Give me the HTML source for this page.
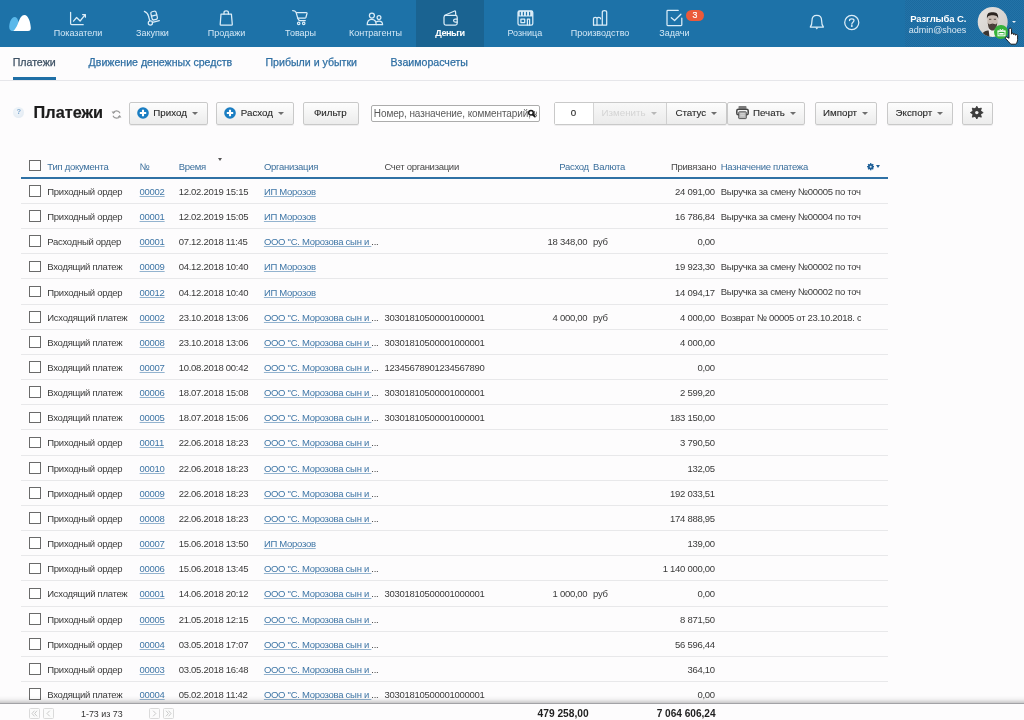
<!DOCTYPE html>
<html><head><meta charset="utf-8"><title>Платежи</title>
<style>
html,body{margin:0;padding:0;}
body{width:1024px;height:720px;overflow:hidden;position:relative;background:#fdfcfd;font-family:"Liberation Sans",sans-serif;}
.t{position:absolute;white-space:nowrap;line-height:1;}
</style></head><body><div style="position:absolute;left:0;top:0;width:1024px;height:720px;will-change:transform">
<div style="position:absolute;left:0;top:0;width:1024px;height:47px;background:#1d72a8"></div><div style="position:absolute;left:905px;top:0;width:119px;height:47px;background-color:#1e6ea3;background-image:repeating-conic-gradient(#1b6a9f 0 25%, #2373a8 0 50%);background-size:2px 2px;opacity:1"></div><div style="position:absolute;left:416px;top:0;width:68px;height:47px;background:#1a6391"></div><svg style="position:absolute;left:0;top:0" width="1024" height="47" viewBox="0 0 1024 47">
<path d="M14.5 17 C11.5 17 9.2 22.5 9.2 27 C9.2 30 11 31.1 13.5 31.1 L15.5 31.1 C17.5 29 18.8 25.5 18.6 22.5 C18.2 19 16.5 17 14.5 17Z" fill="#5ab8ea"/>
<path d="M24.4 15 C21 15 19.5 19.5 17.8 24 C16.5 27 15 29.5 13.3 31.1 L28 31.1 C30 31.1 31 29.8 30.8 27.5 C30.5 22.5 28.5 15 24.4 15Z" fill="#ffffff"/>
<path d="M70.6 12.3 V23.6 Q70.6 24.7 71.7 24.7 H83.2" stroke="#dbedf8" stroke-width="1.25" fill="none" stroke-linecap="round" stroke-linejoin="round"/>
<path d="M73.5 21.2 L76.6 17.5 L80.1 21 L85.2 14.6 M82.6 14.5 H85.4 V17.2" stroke="#dbedf8" stroke-width="1.25" fill="none" stroke-linecap="round" stroke-linejoin="round"/>
<path d="M144.4 11.4 C146.5 12.3 148 13.5 148.6 16.5 L149.8 20.8" stroke="#dbedf8" stroke-width="1.25" fill="none" stroke-linecap="round" stroke-linejoin="round"/>
<circle cx="150.4" cy="22.9" r="2.1" stroke="#dbedf8" stroke-width="1.25" fill="none" stroke-linecap="round" stroke-linejoin="round"/>
<path d="M152.4 22.3 L159.3 20.6" stroke="#dbedf8" stroke-width="1.25" fill="none" stroke-linecap="round" stroke-linejoin="round"/>
<g transform="rotate(-14 154 15.5)"><rect x="151.4" y="11.4" width="5.4" height="8.4" rx="1.6" stroke="#dbedf8" stroke-width="1.25" fill="none" stroke-linecap="round" stroke-linejoin="round"/><path d="M151.4 15.6 H156.8" stroke="#dbedf8" stroke-width="1.25" fill="none" stroke-linecap="round" stroke-linejoin="round"/></g>
<path d="M221 14.1 H231.4 L232.3 24.4 Q232.3 25.1 231.5 25.1 H220.9 Q220.2 25.1 220.2 24.4 Z" stroke="#dbedf8" stroke-width="1.25" fill="none" stroke-linecap="round" stroke-linejoin="round"/>
<path d="M224 14 V12.5 C224 10.2 228.4 10.2 228.4 12.5 V14" stroke="#dbedf8" stroke-width="1.25" fill="none" stroke-linecap="round" stroke-linejoin="round"/>
<path d="M292.7 10.6 Q295.2 10.7 296 12.2 L297.8 18.4 Q298.8 20.6 300 20.6 H305.3" stroke="#dbedf8" stroke-width="1.25" fill="none" stroke-linecap="round" stroke-linejoin="round"/>
<path d="M296.4 12.6 H306.3 Q307.2 12.6 307 13.5 L305.9 17.5 Q305.6 18.2 304.8 18.2 H297.8" stroke="#dbedf8" stroke-width="1.25" fill="none" stroke-linecap="round" stroke-linejoin="round"/>
<circle cx="298.7" cy="23.4" r="1.2" stroke="#dbedf8" stroke-width="1.25" fill="none" stroke-linecap="round" stroke-linejoin="round"/><circle cx="303.7" cy="23.4" r="1.2" stroke="#dbedf8" stroke-width="1.25" fill="none" stroke-linecap="round" stroke-linejoin="round"/>
<circle cx="371.9" cy="15.6" r="2.5" stroke="#dbedf8" stroke-width="1.25" fill="none" stroke-linecap="round" stroke-linejoin="round"/>
<path d="M367.2 24.7 C367.2 21 369.2 19.3 371.7 19.3 C374.2 19.3 376.2 21 376.2 24.7 Z" stroke="#dbedf8" stroke-width="1.25" fill="none" stroke-linecap="round" stroke-linejoin="round"/>
<circle cx="379" cy="17.6" r="1.9" stroke="#dbedf8" stroke-width="1.25" fill="none" stroke-linecap="round" stroke-linejoin="round"/>
<path d="M376.6 21.8 C377.2 21.2 378 21 379 21 C381.2 21 382.6 22.3 382.6 24.7 H376.6" stroke="#dbedf8" stroke-width="1.25" fill="none" stroke-linecap="round" stroke-linejoin="round"/>
<rect x="444" y="15.4" width="13.2" height="9.6" rx="1.8" stroke="#dbedf8" stroke-width="1.25" fill="none" stroke-linecap="round" stroke-linejoin="round"/>
<path d="M444.8 15.3 L454.6 11 Q455.4 10.8 455.5 11.6 L455.8 15.3" stroke="#dbedf8" stroke-width="1.25" fill="none" stroke-linecap="round" stroke-linejoin="round"/>
<path d="M457.1 19.1 H455.2 Q453.6 19.1 453.6 20.6 Q453.6 22.1 455.2 22.1 H457.1" stroke="#dbedf8" stroke-width="1.25" fill="none" stroke-linecap="round" stroke-linejoin="round"/>
<rect x="518" y="10.8" width="14.8" height="14.4" rx="1.6" stroke="#dbedf8" stroke-width="1.25" fill="none" stroke-linecap="round" stroke-linejoin="round"/>
<rect x="518" y="10.8" width="14.8" height="5.8" rx="1.2" fill="#dbedf8"/>
<path d="M520.3 12.4 V15 M523.4 12.4 V15 M526.5 12.4 V15 M529.6 12.4 V15" stroke="#1f71a7" stroke-width="1.2" stroke-linecap="round"/>
<rect x="520.9" y="19.1" width="3.8" height="3.5" stroke="#dbedf8" stroke-width="1.25" fill="none" stroke-linecap="round" stroke-linejoin="round"/>
<path d="M527.4 25 V19.1 H529.6 V25" stroke="#dbedf8" stroke-width="1.25" fill="none" stroke-linecap="round" stroke-linejoin="round"/>
<path d="M593.5 25 V18.8 Q593.5 17.3 595.3 17.3 Q597 17.3 597 18.8 V25 M597 18.8 Q597 17.3 598.8 17.3 Q600.6 17.3 600.6 18.8" stroke="#dbedf8" stroke-width="1.25" fill="none" stroke-linecap="round" stroke-linejoin="round"/>
<path d="M602.3 25 V12.3 Q602.3 10.6 604.5 10.6 Q606.7 10.6 606.7 12.3 V25 Z M593.5 25 H602.3" stroke="#dbedf8" stroke-width="1.25" fill="none" stroke-linecap="round" stroke-linejoin="round"/>
<path d="M678.2 10.4 H667.8 Q667 10.4 667 11.2 V24.7 Q667 25.5 667.8 25.5 H681 Q681.8 25.5 681.8 24.7 V18.2" stroke="#dbedf8" stroke-width="1.25" fill="none" stroke-linecap="round" stroke-linejoin="round"/>
<path d="M671.3 17.7 L674.6 20.5 L680.9 14.2" stroke="#dbedf8" stroke-width="1.25" fill="none" stroke-linecap="round" stroke-linejoin="round"/>
</svg><div class="t " style="left:-222.00px;width:600px;text-align:center;top:29.18px;font-size:9.0px;color:#d4e8f6;">Показатели</div><div class="t " style="left:-147.50px;width:600px;text-align:center;top:29.18px;font-size:9.0px;color:#d4e8f6;">Закупки</div><div class="t " style="left:-73.50px;width:600px;text-align:center;top:29.18px;font-size:9.0px;color:#d4e8f6;">Продажи</div><div class="t " style="left:0.60px;width:600px;text-align:center;top:29.18px;font-size:9.0px;color:#d4e8f6;">Товары</div><div class="t " style="left:75.50px;width:600px;text-align:center;top:29.18px;font-size:9.0px;color:#d4e8f6;">Контрагенты</div><div class="t " style="left:150.00px;width:600px;text-align:center;top:29.10px;font-size:9.1px;color:#ffffff;font-weight:bold;letter-spacing:-0.45px;">Деньги</div><div class="t " style="left:224.80px;width:600px;text-align:center;top:29.18px;font-size:9.0px;color:#d4e8f6;">Розница</div><div class="t " style="left:300.00px;width:600px;text-align:center;top:29.18px;font-size:9.0px;color:#d4e8f6;">Производство</div><div class="t " style="left:374.40px;width:600px;text-align:center;top:29.18px;font-size:9.0px;color:#d4e8f6;">Задачи</div><div style="position:absolute;left:686px;top:10px;width:18px;height:11px;border-radius:5.5px;background:#eb5a3b;color:#fff;font-size:8.8px;line-height:11px;text-align:center;font-weight:normal;-webkit-text-stroke:0.2px #fff">3</div><svg style="position:absolute;left:0;top:0" width="1024" height="47" viewBox="0 0 1024 47"><path d="M810.3 27 H823.4 C822 25.5 821.6 23.5 821.6 20.5 C821.6 17.2 819.5 15.4 816.8 15.4 C814.1 15.4 812 17.2 812 20.5 C812 23.5 811.6 25.5 810.3 27Z" stroke="#dbedf8" stroke-width="1.25" fill="none" stroke-linecap="round" stroke-linejoin="round" stroke-width="1.3"/><path d="M815.2 27.6 L816.8 29.6 L818.4 27.6Z" fill="#dbedf8"/></svg><svg style="position:absolute;left:0;top:0" width="1024" height="47" viewBox="0 0 1024 47"><circle cx="851.75" cy="22.45" r="7.05" stroke="#dbedf8" stroke-width="1.25" fill="none" stroke-linecap="round" stroke-linejoin="round" stroke-width="1.3"/><path d="M849.5 20.6 C849.5 18.4 854 18.4 854 20.6 C854 22.3 851.8 22.3 851.8 24.2" stroke="#dbedf8" stroke-width="1.25" fill="none" stroke-linecap="round" stroke-linejoin="round" stroke-width="1.7" stroke-linecap="butt"/><circle cx="851.8" cy="26" r="1" fill="#dbedf8"/></svg><div class="t " style="left:366.30px;width:600px;text-align:right;top:14.16px;font-size:9.5px;color:#ffffff;font-weight:bold;letter-spacing:-0.12px;">Разглыба С.</div><div class="t " style="left:366.30px;width:600px;text-align:right;top:25.88px;font-size:9.0px;color:#d9e8f3;">admin@shoes</div><svg style="position:absolute;left:977px;top:6px" width="32" height="32" viewBox="977 6 32 32">
<defs><clipPath id="av"><circle cx="992.7" cy="21.9" r="15"/></clipPath>
<linearGradient id="avbg" x1="0" y1="0" x2="1" y2="1"><stop offset="0" stop-color="#e6e3e0"/><stop offset="1" stop-color="#cfcac6"/></linearGradient></defs>
<circle cx="992.7" cy="21.9" r="15" fill="url(#avbg)"/>
<g clip-path="url(#av)">
<path d="M980 40 C981 33 984 31 988 30.5 L997 30.5 C1001 31 1004 33 1005 40Z" fill="#3a3430"/>
<path d="M988.5 29 L996.5 29 L995.5 37 L989.5 37Z" fill="#f2f0ee"/>
<ellipse cx="992.5" cy="21" rx="5.2" ry="7" fill="#c9bcb3"/>
<path d="M987 19 C986.5 13 989 12.3 992.5 12.3 C996 12.3 998.6 13 998.2 19 C997.5 16 996 15.2 992.5 15.2 C989 15.2 987.5 16 987 19Z" fill="#2b2420"/>
<path d="M987.8 22.5 C988 28.5 990 30.5 992.5 30.5 C995 30.5 997 28.5 997.2 22.5 C996.3 25.2 995 24.3 992.5 24.3 C990 24.3 988.7 25.2 987.8 22.5Z" fill="#4a3f39"/><path d="M990.3 24.6 Q992.5 23.6 994.7 24.6" stroke="#3a302a" stroke-width="1" fill="none"/>
<path d="M989 19.3 H991.3 M993.8 19.3 H996" stroke="#4a3e38" stroke-width="0.9"/>
</g></svg><div style="position:absolute;left:994px;top:24.8px;width:14px;height:14.5px;border-radius:50%;background:#36b23a"></div><svg style="position:absolute;left:996.5px;top:27.5px" width="9" height="9" viewBox="0 0 9 9"><rect x="1" y="3.2" width="7" height="4.6" fill="none" stroke="#fff" stroke-width="1"/><rect x="2.3" y="5" width="4.4" height="1.6" fill="#fff"/><path d="M0.5 3 H8.5 M2.8 1 L4.5 3 L6.2 1" stroke="#fff" stroke-width="1" fill="none"/></svg><div style="position:absolute;left:1012.2px;top:21px;width:0;height:0;border-left:2.3px solid transparent;border-right:2.3px solid transparent;border-top:2.6px solid #e8f0f6"></div><svg style="position:absolute;left:1003.2px;top:26.2px" width="17" height="20" viewBox="0 0 17 20">
<path d="M6 3.2 C6 1.8 8.5 1.8 8.5 3.2 V8.2 C8.5 6.8 10.7 6.8 10.7 8.2 V8.8 C10.7 7.5 12.7 7.5 12.7 8.8 V9.3 C12.7 8.2 14.6 8.2 14.6 9.5 V13.5 C14.6 15.5 13.8 17 12.8 18.2 H7.8 C6.5 16.8 4.5 14.5 2.6 12.6 C1.8 11.8 2.6 10.5 3.8 11 L6 12.3 Z" fill="#fff" stroke="#111" stroke-width="0.9" stroke-linejoin="round"/>
</svg><div class="t " style="left:12.70px;top:57.23px;font-size:10.6px;color:#3d5063;-webkit-text-stroke:0.25px currentColor;">Платежи</div><div class="t " style="left:88.60px;top:57.23px;font-size:10.6px;color:#2f6fa3;-webkit-text-stroke:0.25px currentColor;">Движение денежных средств</div><div class="t " style="left:265.50px;top:57.23px;font-size:10.6px;color:#2f6fa3;-webkit-text-stroke:0.25px currentColor;">Прибыли и убытки</div><div class="t " style="left:390.50px;top:57.23px;font-size:10.6px;color:#2f6fa3;-webkit-text-stroke:0.25px currentColor;">Взаиморасчеты</div><div style="position:absolute;left:13px;top:77px;width:43px;height:3px;background:#1f6fa6"></div><div style="position:absolute;left:0;top:80px;width:1024px;height:1px;background:#e6e6ea"></div><div style="position:absolute;left:13px;top:106.5px;width:11px;height:11px;border-radius:50%;background:radial-gradient(circle at 40% 35%,#f3f7fb,#dfe8f1)"></div><div class="t " style="left:-281.20px;width:600px;text-align:center;top:108.25px;font-size:7.5px;color:#80a9cf;font-weight:bold;">?</div><div class="t " style="left:33.60px;top:104.40px;font-size:16.3px;color:#1c1c1c;font-weight:bold;-webkit-text-stroke:0.2px currentColor;">Платежи</div><svg style="position:absolute;left:110.5px;top:108.5px" width="11" height="11" viewBox="0 0 11 11"><path d="M9 4.3 A3.8 3.8 0 0 0 2 4" stroke="#999" stroke-width="1.15" fill="none"/><path d="M2 6.7 A3.8 3.8 0 0 0 9 7" stroke="#999" stroke-width="1.15" fill="none"/><path d="M0.6 2.2 L2.2 5 L4.3 3.2Z M10.4 8.8 L8.8 6 L6.7 7.8Z" fill="#999"/></svg><div style="position:absolute;left:129px;top:102.2px;width:77.0px;height:20.8px;border:1px solid #c9c9c9;border-radius:2px;background:linear-gradient(#fdfdfd,#ececec);box-shadow:0 1px 0 rgba(0,0,0,0.06);"></div><svg style="position:absolute;left:137.1px;top:107.3px" width="12" height="12" viewBox="0 0 12 12"><circle cx="6" cy="6" r="5.8" fill="#1a7dc2"/><path d="M6 2.8 V9.2 M2.8 6 H9.2" stroke="#fff" stroke-width="2.1"/></svg><div class="t " style="left:153.30px;top:107.95px;font-size:9.75px;color:#2b2b2b;-webkit-text-stroke:0.12px currentColor;">Приход</div><div style="position:absolute;left:191.8px;top:111.8px;width:0;height:0;border-left:3.2px solid transparent;border-right:3.2px solid transparent;border-top:3.3px solid #6e6e6e"></div><div style="position:absolute;left:216.3px;top:102.2px;width:75.7px;height:20.8px;border:1px solid #c9c9c9;border-radius:2px;background:linear-gradient(#fdfdfd,#ececec);box-shadow:0 1px 0 rgba(0,0,0,0.06);"></div><svg style="position:absolute;left:224.3px;top:107.3px" width="12" height="12" viewBox="0 0 12 12"><circle cx="6" cy="6" r="5.8" fill="#1a7dc2"/><path d="M6 2.8 V9.2 M2.8 6 H9.2" stroke="#fff" stroke-width="2.1"/></svg><div class="t " style="left:240.80px;top:107.95px;font-size:9.75px;color:#2b2b2b;-webkit-text-stroke:0.12px currentColor;">Расход</div><div style="position:absolute;left:278px;top:111.8px;width:0;height:0;border-left:3.2px solid transparent;border-right:3.2px solid transparent;border-top:3.3px solid #6e6e6e"></div><div style="position:absolute;left:303px;top:102.2px;width:53.5px;height:20.8px;border:1px solid #c9c9c9;border-radius:2px;background:linear-gradient(#fdfdfd,#ececec);box-shadow:0 1px 0 rgba(0,0,0,0.06);"></div><div class="t " style="left:313.90px;top:107.95px;font-size:9.75px;color:#2b2b2b;-webkit-text-stroke:0.12px currentColor;">Фильтр</div><div style="position:absolute;left:371.2px;top:105.2px;width:166.5px;height:14.8px;border:1px solid #acacac;border-radius:2px;background:#fff;overflow:hidden"></div><div style="position:absolute;left:372.5px;top:106.4px;width:164px;height:14px;overflow:hidden;white-space:nowrap"><div class="t" style="left:1.3px;top:2.3px;font-size:10px;letter-spacing:-0.1px;color:#5a5a5a">Номер, назначение, комментарий, контрагент</div></div><svg style="position:absolute;left:0;top:0" width="1024" height="130" viewBox="0 0 1024 130"><circle cx="531" cy="112.7" r="2.3" stroke="#1a1a1a" stroke-width="1.5" fill="#fff"/><path d="M532.7 114.5 L534.9 116.6" stroke="#1a1a1a" stroke-width="1.8" stroke-linecap="round"/></svg><div style="position:absolute;left:554.2px;top:102.2px;width:170.5px;height:20.8px;border:1px solid #c9c9c9;border-radius:2px;background:linear-gradient(#fdfdfd,#ececec);box-shadow:0 1px 0 rgba(0,0,0,0.06);"></div><div style="position:absolute;left:555.2px;top:103.2px;width:37.6px;height:20.8px;background:#fff;border-right:1px solid #d4d4d4"></div><div style="position:absolute;left:593.8px;top:103.2px;width:72.3px;height:20.8px;background:linear-gradient(#f8f8f8,#ebebeb);border-right:1px solid #d0d0d0"></div><div class="t " style="left:273.50px;width:600px;text-align:center;top:107.95px;font-size:9.75px;color:#2b2b2b;-webkit-text-stroke:0.12px currentColor;">0</div><div class="t " style="left:601.60px;top:107.95px;font-size:9.75px;color:#d4d4d4;">Изменить</div><div style="position:absolute;left:650.8px;top:111.8px;width:0;height:0;border-left:3.2px solid transparent;border-right:3.2px solid transparent;border-top:3.3px solid #b8b8b8"></div><div class="t " style="left:675.40px;top:107.95px;font-size:9.75px;color:#2b2b2b;-webkit-text-stroke:0.12px currentColor;">Статус</div><div style="position:absolute;left:710.6px;top:111.8px;width:0;height:0;border-left:3.2px solid transparent;border-right:3.2px solid transparent;border-top:3.3px solid #6e6e6e"></div><div style="position:absolute;left:726.7px;top:102.2px;width:76.8px;height:20.8px;border:1px solid #c9c9c9;border-radius:2px;background:linear-gradient(#fdfdfd,#ececec);box-shadow:0 1px 0 rgba(0,0,0,0.06);"></div><svg style="position:absolute;left:0;top:0" width="1024" height="130" viewBox="0 0 1024 130"><rect x="738.5" y="106" width="8" height="2.8" rx="0.8" fill="#7a7a7a"/><rect x="736.8" y="109.2" width="11.4" height="5.6" rx="1.6" fill="#f4f4f4" stroke="#444" stroke-width="1.5"/><rect x="738.7" y="111.8" width="7.6" height="6.8" rx="0.6" fill="#b9b9b9" stroke="#4a4a4a" stroke-width="0.9"/><path d="M740.3 113.8 H744.7 M740.3 115.8 H744.7" stroke="#e0e0e0" stroke-width="0.8"/></svg><div class="t " style="left:753.00px;top:107.95px;font-size:9.75px;color:#2b2b2b;-webkit-text-stroke:0.12px currentColor;">Печать</div><div style="position:absolute;left:789.6px;top:111.8px;width:0;height:0;border-left:3.2px solid transparent;border-right:3.2px solid transparent;border-top:3.3px solid #6e6e6e"></div><div style="position:absolute;left:815.1px;top:102.2px;width:60.2px;height:20.8px;border:1px solid #c9c9c9;border-radius:2px;background:linear-gradient(#fdfdfd,#ececec);box-shadow:0 1px 0 rgba(0,0,0,0.06);"></div><div class="t " style="left:823.00px;top:107.95px;font-size:9.75px;color:#2b2b2b;-webkit-text-stroke:0.12px currentColor;">Импорт</div><div style="position:absolute;left:861.7px;top:111.8px;width:0;height:0;border-left:3.2px solid transparent;border-right:3.2px solid transparent;border-top:3.3px solid #6e6e6e"></div><div style="position:absolute;left:887.1px;top:102.2px;width:63.9px;height:20.8px;border:1px solid #c9c9c9;border-radius:2px;background:linear-gradient(#fdfdfd,#ececec);box-shadow:0 1px 0 rgba(0,0,0,0.06);"></div><div class="t " style="left:895.60px;top:107.95px;font-size:9.75px;color:#2b2b2b;-webkit-text-stroke:0.12px currentColor;">Экспорт</div><div style="position:absolute;left:937px;top:111.8px;width:0;height:0;border-left:3.2px solid transparent;border-right:3.2px solid transparent;border-top:3.3px solid #6e6e6e"></div><div style="position:absolute;left:961.9px;top:102.2px;width:28.7px;height:20.8px;border:1px solid #c9c9c9;border-radius:2px;background:linear-gradient(#fdfdfd,#ececec);box-shadow:0 1px 0 rgba(0,0,0,0.06);"></div><svg style="position:absolute;left:0;top:0" width="1024" height="130" viewBox="0 0 1024 130"><polygon points="976.80,106.20 978.33,108.90 981.33,108.07 980.50,111.07 983.20,112.60 980.50,114.13 981.33,117.13 978.33,116.30 976.80,119.00 975.27,116.30 972.27,117.13 973.10,114.13 970.40,112.60 973.10,111.07 972.27,108.07 975.27,108.90" fill="#3d3d3d" stroke="#3d3d3d" stroke-width="0.9" stroke-linejoin="round"/><circle cx="976.8" cy="112.6" r="4.6" fill="#3d3d3d"/><circle cx="976.8" cy="112.6" r="1.7" fill="#f2f2f2"/></svg><div style="position:absolute;left:29px;top:159.55px;width:9.7px;height:9.7px;border:1.1px solid #6a6a6a;background:#fff"></div><div class="t " style="left:47.30px;top:161.56px;font-size:9.5px;color:#3b6f9c;letter-spacing:-0.28px;">Тип документа</div><div class="t " style="left:139.60px;top:161.56px;font-size:9.5px;color:#3b6f9c;letter-spacing:-0.28px;">№</div><div class="t " style="left:178.75px;top:161.56px;font-size:9.5px;color:#3b6f9c;letter-spacing:-0.28px;">Время</div><div style="position:absolute;left:217.8px;top:157.5px;width:0;height:0;border-left:2.2px solid transparent;border-right:2.2px solid transparent;border-top:3px solid #555"></div><div class="t " style="left:263.90px;top:161.56px;font-size:9.5px;color:#3b6f9c;letter-spacing:-0.28px;">Организация</div><div class="t " style="left:384.40px;top:161.56px;font-size:9.5px;color:#484848;letter-spacing:-0.28px;">Счет организации</div><div class="t " style="left:-11.20px;width:600px;text-align:right;top:161.56px;font-size:9.5px;color:#3b6f9c;letter-spacing:-0.28px;">Расход</div><div class="t " style="left:593.10px;top:161.56px;font-size:9.5px;color:#3b6f9c;letter-spacing:-0.28px;">Валюта</div><div class="t " style="left:116.20px;width:600px;text-align:right;top:161.56px;font-size:9.5px;color:#484848;letter-spacing:-0.28px;">Привязано</div><div class="t " style="left:720.70px;top:161.56px;font-size:9.5px;color:#3b6f9c;letter-spacing:-0.28px;">Назначение платежа</div><svg style="position:absolute;left:866.6px;top:163.2px" width="7.4" height="7.4" viewBox="0 0 8 8"><g fill="#1c5e97"><circle cx="4" cy="4" r="2.9"/><rect x="3.25" y="0.1" width="1.5" height="2" transform="rotate(0 4 4)"/><rect x="3.25" y="0.1" width="1.5" height="2" transform="rotate(45 4 4)"/><rect x="3.25" y="0.1" width="1.5" height="2" transform="rotate(90 4 4)"/><rect x="3.25" y="0.1" width="1.5" height="2" transform="rotate(135 4 4)"/><rect x="3.25" y="0.1" width="1.5" height="2" transform="rotate(180 4 4)"/><rect x="3.25" y="0.1" width="1.5" height="2" transform="rotate(225 4 4)"/><rect x="3.25" y="0.1" width="1.5" height="2" transform="rotate(270 4 4)"/><rect x="3.25" y="0.1" width="1.5" height="2" transform="rotate(315 4 4)"/></g><circle cx="4" cy="4" r="1.1" fill="#d8e8f0"/></svg><div style="position:absolute;left:876.3px;top:165px;width:0;height:0;border-left:2px solid transparent;border-right:2px solid transparent;border-top:3px solid #1f5f95"></div><div style="position:absolute;left:21px;top:177.3px;width:867px;height:2px;background:#2f71a5"></div><div style="position:absolute;left:21px;top:203.00px;width:867px;height:1px;background:#e8e8ea"></div><div style="position:absolute;left:29px;top:185.15px;width:9.7px;height:9.7px;border:1.1px solid #6a6a6a;background:#fff"></div><div class="t " style="left:47.30px;top:186.86px;font-size:9.5px;color:#3a3a3a;letter-spacing:-0.28px;">Приходный ордер</div><div class="t " style="left:139.60px;top:186.86px;font-size:9.5px;color:#3f76a6;letter-spacing:-0.28px;text-decoration:underline;text-decoration-color:#93b3cf;">00002</div><div class="t " style="left:178.75px;top:186.86px;font-size:9.5px;color:#3a3a3a;letter-spacing:-0.28px;">12.02.2019 15:15</div><div class="t " style="left:263.90px;top:186.86px;font-size:9.5px;color:#3f76a6;letter-spacing:-0.28px;text-decoration:underline;text-decoration-color:#93b3cf;">ИП Морозов</div><div class="t " style="left:114.80px;width:600px;text-align:right;top:186.86px;font-size:9.5px;color:#3a3a3a;letter-spacing:-0.28px;">24 091,00</div><div style="position:absolute;left:720.7px;top:184.90px;width:140px;height:14px;overflow:hidden;white-space:nowrap"><div class="t" style="left:0;top:1.96px;font-size:9.5px;color:#3a3a3a;letter-spacing:-0.28px;">Выручка за смену №00005 по точке продаж</div></div><div style="position:absolute;left:21px;top:228.16px;width:867px;height:1px;background:#e8e8ea"></div><div style="position:absolute;left:29px;top:210.31px;width:9.7px;height:9.7px;border:1.1px solid #6a6a6a;background:#fff"></div><div class="t " style="left:47.30px;top:212.02px;font-size:9.5px;color:#3a3a3a;letter-spacing:-0.28px;">Приходный ордер</div><div class="t " style="left:139.60px;top:212.02px;font-size:9.5px;color:#3f76a6;letter-spacing:-0.28px;text-decoration:underline;text-decoration-color:#93b3cf;">00001</div><div class="t " style="left:178.75px;top:212.02px;font-size:9.5px;color:#3a3a3a;letter-spacing:-0.28px;">12.02.2019 15:05</div><div class="t " style="left:263.90px;top:212.02px;font-size:9.5px;color:#3f76a6;letter-spacing:-0.28px;text-decoration:underline;text-decoration-color:#93b3cf;">ИП Морозов</div><div class="t " style="left:114.80px;width:600px;text-align:right;top:212.02px;font-size:9.5px;color:#3a3a3a;letter-spacing:-0.28px;">16 786,84</div><div style="position:absolute;left:720.7px;top:210.06px;width:140px;height:14px;overflow:hidden;white-space:nowrap"><div class="t" style="left:0;top:1.96px;font-size:9.5px;color:#3a3a3a;letter-spacing:-0.28px;">Выручка за смену №00004 по точке продаж</div></div><div style="position:absolute;left:21px;top:253.32px;width:867px;height:1px;background:#e8e8ea"></div><div style="position:absolute;left:29px;top:235.47px;width:9.7px;height:9.7px;border:1.1px solid #6a6a6a;background:#fff"></div><div class="t " style="left:47.30px;top:237.18px;font-size:9.5px;color:#3a3a3a;letter-spacing:-0.28px;">Расходный ордер</div><div class="t " style="left:139.60px;top:237.18px;font-size:9.5px;color:#3f76a6;letter-spacing:-0.28px;text-decoration:underline;text-decoration-color:#93b3cf;">00001</div><div class="t " style="left:178.75px;top:237.18px;font-size:9.5px;color:#3a3a3a;letter-spacing:-0.28px;">07.12.2018 11:45</div><div class="t " style="left:263.90px;top:237.18px;font-size:9.5px;color:#3f76a6;letter-spacing:-0.28px;"><span style="text-decoration:underline;text-decoration-color:#93b3cf">ООО "С. Морозова сын и </span><span style="color:#3a3a3a">...</span></div><div class="t " style="left:-12.70px;width:600px;text-align:right;top:237.18px;font-size:9.5px;color:#3a3a3a;letter-spacing:-0.28px;">18 348,00</div><div class="t " style="left:593.10px;top:237.18px;font-size:9.5px;color:#3a3a3a;letter-spacing:-0.28px;">руб</div><div class="t " style="left:114.80px;width:600px;text-align:right;top:237.18px;font-size:9.5px;color:#3a3a3a;letter-spacing:-0.28px;">0,00</div><div style="position:absolute;left:21px;top:278.48px;width:867px;height:1px;background:#e8e8ea"></div><div style="position:absolute;left:29px;top:260.63px;width:9.7px;height:9.7px;border:1.1px solid #6a6a6a;background:#fff"></div><div class="t " style="left:47.30px;top:262.34px;font-size:9.5px;color:#3a3a3a;letter-spacing:-0.28px;">Входящий платеж</div><div class="t " style="left:139.60px;top:262.34px;font-size:9.5px;color:#3f76a6;letter-spacing:-0.28px;text-decoration:underline;text-decoration-color:#93b3cf;">00009</div><div class="t " style="left:178.75px;top:262.34px;font-size:9.5px;color:#3a3a3a;letter-spacing:-0.28px;">04.12.2018 10:40</div><div class="t " style="left:263.90px;top:262.34px;font-size:9.5px;color:#3f76a6;letter-spacing:-0.28px;text-decoration:underline;text-decoration-color:#93b3cf;">ИП Морозов</div><div class="t " style="left:114.80px;width:600px;text-align:right;top:262.34px;font-size:9.5px;color:#3a3a3a;letter-spacing:-0.28px;">19 923,30</div><div style="position:absolute;left:720.7px;top:260.38px;width:140px;height:14px;overflow:hidden;white-space:nowrap"><div class="t" style="left:0;top:1.96px;font-size:9.5px;color:#3a3a3a;letter-spacing:-0.28px;">Выручка за смену №00002 по точке продаж</div></div><div style="position:absolute;left:21px;top:303.64px;width:867px;height:1px;background:#e8e8ea"></div><div style="position:absolute;left:29px;top:285.79px;width:9.7px;height:9.7px;border:1.1px solid #6a6a6a;background:#fff"></div><div class="t " style="left:47.30px;top:287.50px;font-size:9.5px;color:#3a3a3a;letter-spacing:-0.28px;">Приходный ордер</div><div class="t " style="left:139.60px;top:287.50px;font-size:9.5px;color:#3f76a6;letter-spacing:-0.28px;text-decoration:underline;text-decoration-color:#93b3cf;">00012</div><div class="t " style="left:178.75px;top:287.50px;font-size:9.5px;color:#3a3a3a;letter-spacing:-0.28px;">04.12.2018 10:40</div><div class="t " style="left:263.90px;top:287.50px;font-size:9.5px;color:#3f76a6;letter-spacing:-0.28px;text-decoration:underline;text-decoration-color:#93b3cf;">ИП Морозов</div><div class="t " style="left:114.80px;width:600px;text-align:right;top:287.50px;font-size:9.5px;color:#3a3a3a;letter-spacing:-0.28px;">14 094,17</div><div style="position:absolute;left:720.7px;top:285.54px;width:140px;height:14px;overflow:hidden;white-space:nowrap"><div class="t" style="left:0;top:1.96px;font-size:9.5px;color:#3a3a3a;letter-spacing:-0.28px;">Выручка за смену №00002 по точке продаж</div></div><div style="position:absolute;left:21px;top:328.80px;width:867px;height:1px;background:#e8e8ea"></div><div style="position:absolute;left:29px;top:310.95px;width:9.7px;height:9.7px;border:1.1px solid #6a6a6a;background:#fff"></div><div class="t " style="left:47.30px;top:312.66px;font-size:9.5px;color:#3a3a3a;letter-spacing:-0.28px;">Исходящий платеж</div><div class="t " style="left:139.60px;top:312.66px;font-size:9.5px;color:#3f76a6;letter-spacing:-0.28px;text-decoration:underline;text-decoration-color:#93b3cf;">00002</div><div class="t " style="left:178.75px;top:312.66px;font-size:9.5px;color:#3a3a3a;letter-spacing:-0.28px;">23.10.2018 13:06</div><div class="t " style="left:263.90px;top:312.66px;font-size:9.5px;color:#3f76a6;letter-spacing:-0.28px;"><span style="text-decoration:underline;text-decoration-color:#93b3cf">ООО "С. Морозова сын и </span><span style="color:#3a3a3a">...</span></div><div class="t " style="left:384.40px;top:312.66px;font-size:9.5px;color:#3a3a3a;letter-spacing:-0.28px;">30301810500001000001</div><div class="t " style="left:-12.70px;width:600px;text-align:right;top:312.66px;font-size:9.5px;color:#3a3a3a;letter-spacing:-0.28px;">4 000,00</div><div class="t " style="left:593.10px;top:312.66px;font-size:9.5px;color:#3a3a3a;letter-spacing:-0.28px;">руб</div><div class="t " style="left:114.80px;width:600px;text-align:right;top:312.66px;font-size:9.5px;color:#3a3a3a;letter-spacing:-0.28px;">4 000,00</div><div style="position:absolute;left:720.7px;top:310.70px;width:140px;height:14px;overflow:hidden;white-space:nowrap"><div class="t" style="left:0;top:1.96px;font-size:9.5px;color:#3a3a3a;letter-spacing:-0.28px;">Возврат № 00005 от 23.10.2018. с</div></div><div style="position:absolute;left:21px;top:353.96px;width:867px;height:1px;background:#e8e8ea"></div><div style="position:absolute;left:29px;top:336.11px;width:9.7px;height:9.7px;border:1.1px solid #6a6a6a;background:#fff"></div><div class="t " style="left:47.30px;top:337.82px;font-size:9.5px;color:#3a3a3a;letter-spacing:-0.28px;">Входящий платеж</div><div class="t " style="left:139.60px;top:337.82px;font-size:9.5px;color:#3f76a6;letter-spacing:-0.28px;text-decoration:underline;text-decoration-color:#93b3cf;">00008</div><div class="t " style="left:178.75px;top:337.82px;font-size:9.5px;color:#3a3a3a;letter-spacing:-0.28px;">23.10.2018 13:06</div><div class="t " style="left:263.90px;top:337.82px;font-size:9.5px;color:#3f76a6;letter-spacing:-0.28px;"><span style="text-decoration:underline;text-decoration-color:#93b3cf">ООО "С. Морозова сын и </span><span style="color:#3a3a3a">...</span></div><div class="t " style="left:384.40px;top:337.82px;font-size:9.5px;color:#3a3a3a;letter-spacing:-0.28px;">30301810500001000001</div><div class="t " style="left:114.80px;width:600px;text-align:right;top:337.82px;font-size:9.5px;color:#3a3a3a;letter-spacing:-0.28px;">4 000,00</div><div style="position:absolute;left:21px;top:379.12px;width:867px;height:1px;background:#e8e8ea"></div><div style="position:absolute;left:29px;top:361.27px;width:9.7px;height:9.7px;border:1.1px solid #6a6a6a;background:#fff"></div><div class="t " style="left:47.30px;top:362.98px;font-size:9.5px;color:#3a3a3a;letter-spacing:-0.28px;">Входящий платеж</div><div class="t " style="left:139.60px;top:362.98px;font-size:9.5px;color:#3f76a6;letter-spacing:-0.28px;text-decoration:underline;text-decoration-color:#93b3cf;">00007</div><div class="t " style="left:178.75px;top:362.98px;font-size:9.5px;color:#3a3a3a;letter-spacing:-0.28px;">10.08.2018 00:42</div><div class="t " style="left:263.90px;top:362.98px;font-size:9.5px;color:#3f76a6;letter-spacing:-0.28px;"><span style="text-decoration:underline;text-decoration-color:#93b3cf">ООО "С. Морозова сын и </span><span style="color:#3a3a3a">...</span></div><div class="t " style="left:384.40px;top:362.98px;font-size:9.5px;color:#3a3a3a;letter-spacing:-0.28px;">12345678901234567890</div><div class="t " style="left:114.80px;width:600px;text-align:right;top:362.98px;font-size:9.5px;color:#3a3a3a;letter-spacing:-0.28px;">0,00</div><div style="position:absolute;left:21px;top:404.28px;width:867px;height:1px;background:#e8e8ea"></div><div style="position:absolute;left:29px;top:386.43px;width:9.7px;height:9.7px;border:1.1px solid #6a6a6a;background:#fff"></div><div class="t " style="left:47.30px;top:388.14px;font-size:9.5px;color:#3a3a3a;letter-spacing:-0.28px;">Входящий платеж</div><div class="t " style="left:139.60px;top:388.14px;font-size:9.5px;color:#3f76a6;letter-spacing:-0.28px;text-decoration:underline;text-decoration-color:#93b3cf;">00006</div><div class="t " style="left:178.75px;top:388.14px;font-size:9.5px;color:#3a3a3a;letter-spacing:-0.28px;">18.07.2018 15:08</div><div class="t " style="left:263.90px;top:388.14px;font-size:9.5px;color:#3f76a6;letter-spacing:-0.28px;"><span style="text-decoration:underline;text-decoration-color:#93b3cf">ООО "С. Морозова сын и </span><span style="color:#3a3a3a">...</span></div><div class="t " style="left:384.40px;top:388.14px;font-size:9.5px;color:#3a3a3a;letter-spacing:-0.28px;">30301810500001000001</div><div class="t " style="left:114.80px;width:600px;text-align:right;top:388.14px;font-size:9.5px;color:#3a3a3a;letter-spacing:-0.28px;">2 599,20</div><div style="position:absolute;left:21px;top:429.44px;width:867px;height:1px;background:#e8e8ea"></div><div style="position:absolute;left:29px;top:411.59px;width:9.7px;height:9.7px;border:1.1px solid #6a6a6a;background:#fff"></div><div class="t " style="left:47.30px;top:413.30px;font-size:9.5px;color:#3a3a3a;letter-spacing:-0.28px;">Входящий платеж</div><div class="t " style="left:139.60px;top:413.30px;font-size:9.5px;color:#3f76a6;letter-spacing:-0.28px;text-decoration:underline;text-decoration-color:#93b3cf;">00005</div><div class="t " style="left:178.75px;top:413.30px;font-size:9.5px;color:#3a3a3a;letter-spacing:-0.28px;">18.07.2018 15:06</div><div class="t " style="left:263.90px;top:413.30px;font-size:9.5px;color:#3f76a6;letter-spacing:-0.28px;"><span style="text-decoration:underline;text-decoration-color:#93b3cf">ООО "С. Морозова сын и </span><span style="color:#3a3a3a">...</span></div><div class="t " style="left:384.40px;top:413.30px;font-size:9.5px;color:#3a3a3a;letter-spacing:-0.28px;">30301810500001000001</div><div class="t " style="left:114.80px;width:600px;text-align:right;top:413.30px;font-size:9.5px;color:#3a3a3a;letter-spacing:-0.28px;">183 150,00</div><div style="position:absolute;left:21px;top:454.60px;width:867px;height:1px;background:#e8e8ea"></div><div style="position:absolute;left:29px;top:436.75px;width:9.7px;height:9.7px;border:1.1px solid #6a6a6a;background:#fff"></div><div class="t " style="left:47.30px;top:438.46px;font-size:9.5px;color:#3a3a3a;letter-spacing:-0.28px;">Приходный ордер</div><div class="t " style="left:139.60px;top:438.46px;font-size:9.5px;color:#3f76a6;letter-spacing:-0.28px;text-decoration:underline;text-decoration-color:#93b3cf;">00011</div><div class="t " style="left:178.75px;top:438.46px;font-size:9.5px;color:#3a3a3a;letter-spacing:-0.28px;">22.06.2018 18:23</div><div class="t " style="left:263.90px;top:438.46px;font-size:9.5px;color:#3f76a6;letter-spacing:-0.28px;"><span style="text-decoration:underline;text-decoration-color:#93b3cf">ООО "С. Морозова сын и </span><span style="color:#3a3a3a">...</span></div><div class="t " style="left:114.80px;width:600px;text-align:right;top:438.46px;font-size:9.5px;color:#3a3a3a;letter-spacing:-0.28px;">3 790,50</div><div style="position:absolute;left:21px;top:479.76px;width:867px;height:1px;background:#e8e8ea"></div><div style="position:absolute;left:29px;top:461.91px;width:9.7px;height:9.7px;border:1.1px solid #6a6a6a;background:#fff"></div><div class="t " style="left:47.30px;top:463.62px;font-size:9.5px;color:#3a3a3a;letter-spacing:-0.28px;">Приходный ордер</div><div class="t " style="left:139.60px;top:463.62px;font-size:9.5px;color:#3f76a6;letter-spacing:-0.28px;text-decoration:underline;text-decoration-color:#93b3cf;">00010</div><div class="t " style="left:178.75px;top:463.62px;font-size:9.5px;color:#3a3a3a;letter-spacing:-0.28px;">22.06.2018 18:23</div><div class="t " style="left:263.90px;top:463.62px;font-size:9.5px;color:#3f76a6;letter-spacing:-0.28px;"><span style="text-decoration:underline;text-decoration-color:#93b3cf">ООО "С. Морозова сын и </span><span style="color:#3a3a3a">...</span></div><div class="t " style="left:114.80px;width:600px;text-align:right;top:463.62px;font-size:9.5px;color:#3a3a3a;letter-spacing:-0.28px;">132,05</div><div style="position:absolute;left:21px;top:504.92px;width:867px;height:1px;background:#e8e8ea"></div><div style="position:absolute;left:29px;top:487.07px;width:9.7px;height:9.7px;border:1.1px solid #6a6a6a;background:#fff"></div><div class="t " style="left:47.30px;top:488.78px;font-size:9.5px;color:#3a3a3a;letter-spacing:-0.28px;">Приходный ордер</div><div class="t " style="left:139.60px;top:488.78px;font-size:9.5px;color:#3f76a6;letter-spacing:-0.28px;text-decoration:underline;text-decoration-color:#93b3cf;">00009</div><div class="t " style="left:178.75px;top:488.78px;font-size:9.5px;color:#3a3a3a;letter-spacing:-0.28px;">22.06.2018 18:23</div><div class="t " style="left:263.90px;top:488.78px;font-size:9.5px;color:#3f76a6;letter-spacing:-0.28px;"><span style="text-decoration:underline;text-decoration-color:#93b3cf">ООО "С. Морозова сын и </span><span style="color:#3a3a3a">...</span></div><div class="t " style="left:114.80px;width:600px;text-align:right;top:488.78px;font-size:9.5px;color:#3a3a3a;letter-spacing:-0.28px;">192 033,51</div><div style="position:absolute;left:21px;top:530.08px;width:867px;height:1px;background:#e8e8ea"></div><div style="position:absolute;left:29px;top:512.23px;width:9.7px;height:9.7px;border:1.1px solid #6a6a6a;background:#fff"></div><div class="t " style="left:47.30px;top:513.94px;font-size:9.5px;color:#3a3a3a;letter-spacing:-0.28px;">Приходный ордер</div><div class="t " style="left:139.60px;top:513.94px;font-size:9.5px;color:#3f76a6;letter-spacing:-0.28px;text-decoration:underline;text-decoration-color:#93b3cf;">00008</div><div class="t " style="left:178.75px;top:513.94px;font-size:9.5px;color:#3a3a3a;letter-spacing:-0.28px;">22.06.2018 18:23</div><div class="t " style="left:263.90px;top:513.94px;font-size:9.5px;color:#3f76a6;letter-spacing:-0.28px;"><span style="text-decoration:underline;text-decoration-color:#93b3cf">ООО "С. Морозова сын и </span><span style="color:#3a3a3a">...</span></div><div class="t " style="left:114.80px;width:600px;text-align:right;top:513.94px;font-size:9.5px;color:#3a3a3a;letter-spacing:-0.28px;">174 888,95</div><div style="position:absolute;left:21px;top:555.24px;width:867px;height:1px;background:#e8e8ea"></div><div style="position:absolute;left:29px;top:537.39px;width:9.7px;height:9.7px;border:1.1px solid #6a6a6a;background:#fff"></div><div class="t " style="left:47.30px;top:539.10px;font-size:9.5px;color:#3a3a3a;letter-spacing:-0.28px;">Приходный ордер</div><div class="t " style="left:139.60px;top:539.10px;font-size:9.5px;color:#3f76a6;letter-spacing:-0.28px;text-decoration:underline;text-decoration-color:#93b3cf;">00007</div><div class="t " style="left:178.75px;top:539.10px;font-size:9.5px;color:#3a3a3a;letter-spacing:-0.28px;">15.06.2018 13:50</div><div class="t " style="left:263.90px;top:539.10px;font-size:9.5px;color:#3f76a6;letter-spacing:-0.28px;text-decoration:underline;text-decoration-color:#93b3cf;">ИП Морозов</div><div class="t " style="left:114.80px;width:600px;text-align:right;top:539.10px;font-size:9.5px;color:#3a3a3a;letter-spacing:-0.28px;">139,00</div><div style="position:absolute;left:21px;top:580.40px;width:867px;height:1px;background:#e8e8ea"></div><div style="position:absolute;left:29px;top:562.55px;width:9.7px;height:9.7px;border:1.1px solid #6a6a6a;background:#fff"></div><div class="t " style="left:47.30px;top:564.26px;font-size:9.5px;color:#3a3a3a;letter-spacing:-0.28px;">Приходный ордер</div><div class="t " style="left:139.60px;top:564.26px;font-size:9.5px;color:#3f76a6;letter-spacing:-0.28px;text-decoration:underline;text-decoration-color:#93b3cf;">00006</div><div class="t " style="left:178.75px;top:564.26px;font-size:9.5px;color:#3a3a3a;letter-spacing:-0.28px;">15.06.2018 13:45</div><div class="t " style="left:263.90px;top:564.26px;font-size:9.5px;color:#3f76a6;letter-spacing:-0.28px;"><span style="text-decoration:underline;text-decoration-color:#93b3cf">ООО "С. Морозова сын и </span><span style="color:#3a3a3a">...</span></div><div class="t " style="left:114.80px;width:600px;text-align:right;top:564.26px;font-size:9.5px;color:#3a3a3a;letter-spacing:-0.28px;">1 140 000,00</div><div style="position:absolute;left:21px;top:605.56px;width:867px;height:1px;background:#e8e8ea"></div><div style="position:absolute;left:29px;top:587.71px;width:9.7px;height:9.7px;border:1.1px solid #6a6a6a;background:#fff"></div><div class="t " style="left:47.30px;top:589.42px;font-size:9.5px;color:#3a3a3a;letter-spacing:-0.28px;">Исходящий платеж</div><div class="t " style="left:139.60px;top:589.42px;font-size:9.5px;color:#3f76a6;letter-spacing:-0.28px;text-decoration:underline;text-decoration-color:#93b3cf;">00001</div><div class="t " style="left:178.75px;top:589.42px;font-size:9.5px;color:#3a3a3a;letter-spacing:-0.28px;">14.06.2018 20:12</div><div class="t " style="left:263.90px;top:589.42px;font-size:9.5px;color:#3f76a6;letter-spacing:-0.28px;"><span style="text-decoration:underline;text-decoration-color:#93b3cf">ООО "С. Морозова сын и </span><span style="color:#3a3a3a">...</span></div><div class="t " style="left:384.40px;top:589.42px;font-size:9.5px;color:#3a3a3a;letter-spacing:-0.28px;">30301810500001000001</div><div class="t " style="left:-12.70px;width:600px;text-align:right;top:589.42px;font-size:9.5px;color:#3a3a3a;letter-spacing:-0.28px;">1 000,00</div><div class="t " style="left:593.10px;top:589.42px;font-size:9.5px;color:#3a3a3a;letter-spacing:-0.28px;">руб</div><div class="t " style="left:114.80px;width:600px;text-align:right;top:589.42px;font-size:9.5px;color:#3a3a3a;letter-spacing:-0.28px;">0,00</div><div style="position:absolute;left:21px;top:630.72px;width:867px;height:1px;background:#e8e8ea"></div><div style="position:absolute;left:29px;top:612.87px;width:9.7px;height:9.7px;border:1.1px solid #6a6a6a;background:#fff"></div><div class="t " style="left:47.30px;top:614.58px;font-size:9.5px;color:#3a3a3a;letter-spacing:-0.28px;">Приходный ордер</div><div class="t " style="left:139.60px;top:614.58px;font-size:9.5px;color:#3f76a6;letter-spacing:-0.28px;text-decoration:underline;text-decoration-color:#93b3cf;">00005</div><div class="t " style="left:178.75px;top:614.58px;font-size:9.5px;color:#3a3a3a;letter-spacing:-0.28px;">21.05.2018 12:15</div><div class="t " style="left:263.90px;top:614.58px;font-size:9.5px;color:#3f76a6;letter-spacing:-0.28px;"><span style="text-decoration:underline;text-decoration-color:#93b3cf">ООО "С. Морозова сын и </span><span style="color:#3a3a3a">...</span></div><div class="t " style="left:114.80px;width:600px;text-align:right;top:614.58px;font-size:9.5px;color:#3a3a3a;letter-spacing:-0.28px;">8 871,50</div><div style="position:absolute;left:21px;top:655.88px;width:867px;height:1px;background:#e8e8ea"></div><div style="position:absolute;left:29px;top:638.03px;width:9.7px;height:9.7px;border:1.1px solid #6a6a6a;background:#fff"></div><div class="t " style="left:47.30px;top:639.74px;font-size:9.5px;color:#3a3a3a;letter-spacing:-0.28px;">Приходный ордер</div><div class="t " style="left:139.60px;top:639.74px;font-size:9.5px;color:#3f76a6;letter-spacing:-0.28px;text-decoration:underline;text-decoration-color:#93b3cf;">00004</div><div class="t " style="left:178.75px;top:639.74px;font-size:9.5px;color:#3a3a3a;letter-spacing:-0.28px;">03.05.2018 17:07</div><div class="t " style="left:263.90px;top:639.74px;font-size:9.5px;color:#3f76a6;letter-spacing:-0.28px;"><span style="text-decoration:underline;text-decoration-color:#93b3cf">ООО "С. Морозова сын и </span><span style="color:#3a3a3a">...</span></div><div class="t " style="left:114.80px;width:600px;text-align:right;top:639.74px;font-size:9.5px;color:#3a3a3a;letter-spacing:-0.28px;">56 596,44</div><div style="position:absolute;left:21px;top:681.04px;width:867px;height:1px;background:#e8e8ea"></div><div style="position:absolute;left:29px;top:663.19px;width:9.7px;height:9.7px;border:1.1px solid #6a6a6a;background:#fff"></div><div class="t " style="left:47.30px;top:664.90px;font-size:9.5px;color:#3a3a3a;letter-spacing:-0.28px;">Приходный ордер</div><div class="t " style="left:139.60px;top:664.90px;font-size:9.5px;color:#3f76a6;letter-spacing:-0.28px;text-decoration:underline;text-decoration-color:#93b3cf;">00003</div><div class="t " style="left:178.75px;top:664.90px;font-size:9.5px;color:#3a3a3a;letter-spacing:-0.28px;">03.05.2018 16:48</div><div class="t " style="left:263.90px;top:664.90px;font-size:9.5px;color:#3f76a6;letter-spacing:-0.28px;"><span style="text-decoration:underline;text-decoration-color:#93b3cf">ООО "С. Морозова сын и </span><span style="color:#3a3a3a">...</span></div><div class="t " style="left:114.80px;width:600px;text-align:right;top:664.90px;font-size:9.5px;color:#3a3a3a;letter-spacing:-0.28px;">364,10</div><div style="position:absolute;left:21px;top:706.20px;width:867px;height:1px;background:#e8e8ea"></div><div style="position:absolute;left:29px;top:688.35px;width:9.7px;height:9.7px;border:1.1px solid #6a6a6a;background:#fff"></div><div class="t " style="left:47.30px;top:690.06px;font-size:9.5px;color:#3a3a3a;letter-spacing:-0.28px;">Входящий платеж</div><div class="t " style="left:139.60px;top:690.06px;font-size:9.5px;color:#3f76a6;letter-spacing:-0.28px;text-decoration:underline;text-decoration-color:#93b3cf;">00004</div><div class="t " style="left:178.75px;top:690.06px;font-size:9.5px;color:#3a3a3a;letter-spacing:-0.28px;">05.02.2018 11:42</div><div class="t " style="left:263.90px;top:690.06px;font-size:9.5px;color:#3f76a6;letter-spacing:-0.28px;"><span style="text-decoration:underline;text-decoration-color:#93b3cf">ООО "С. Морозова сын и </span><span style="color:#3a3a3a">...</span></div><div class="t " style="left:384.40px;top:690.06px;font-size:9.5px;color:#3a3a3a;letter-spacing:-0.28px;">30301810500001000001</div><div class="t " style="left:114.80px;width:600px;text-align:right;top:690.06px;font-size:9.5px;color:#3a3a3a;letter-spacing:-0.28px;">0,00</div><div style="position:absolute;left:0;top:696px;width:1024px;height:7px;background:linear-gradient(rgba(0,0,0,0),rgba(0,0,0,0.04) 45%,rgba(0,0,0,0.2))"></div><div style="position:absolute;left:0;top:703px;width:1024px;height:17px;background:#fdfcfd;border-top:1px solid #a2a2a6"></div><div style="position:absolute;left:29.3px;top:708.3px;width:8.7px;height:8.5px;border:1px solid #dadada;border-radius:1.5px;background:#fbfbfb"></div><svg style="position:absolute;left:0;top:0;width:1024px;height:720px;pointer-events:none" viewBox="0 0 1024 720"><path d="M34.449999999999996 710.7 L32.05 713.5 L34.449999999999996 716.3 M37.05 710.7 L34.65 713.5 L37.05 716.3" stroke="#c4c4c4" stroke-width="0.9" fill="none"/></svg><div style="position:absolute;left:43.4px;top:708.3px;width:8.3px;height:8.5px;border:1px solid #dadada;border-radius:1.5px;background:#fbfbfb"></div><svg style="position:absolute;left:0;top:0;width:1024px;height:720px;pointer-events:none" viewBox="0 0 1024 720"><path d="M49.75 710.7 L47.05 713.5 L49.75 716.3" stroke="#c4c4c4" stroke-width="0.9" fill="none"/></svg><div style="position:absolute;left:148.8px;top:708.3px;width:9.0px;height:8.5px;border:1px solid #dadada;border-radius:1.5px;background:#fbfbfb"></div><svg style="position:absolute;left:0;top:0;width:1024px;height:720px;pointer-events:none" viewBox="0 0 1024 720"><path d="M153.10000000000002 710.7 L155.8 713.5 L153.10000000000002 716.3" stroke="#c4c4c4" stroke-width="0.9" fill="none"/></svg><div style="position:absolute;left:163px;top:708.3px;width:8.8px;height:8.5px;border:1px solid #dadada;border-radius:1.5px;background:#fbfbfb"></div><svg style="position:absolute;left:0;top:0;width:1024px;height:720px;pointer-events:none" viewBox="0 0 1024 720"><path d="M168.6 710.7 L171.0 713.5 L168.6 716.3 M166.0 710.7 L168.4 713.5 L166.0 716.3" stroke="#c4c4c4" stroke-width="0.9" fill="none"/></svg><div class="t " style="left:81.00px;top:709.87px;font-size:8.9px;color:#333;">1-73 из 73</div><div class="t " style="left:-11.40px;width:600px;text-align:right;top:708.87px;font-size:10.2px;color:#1e1e1e;font-weight:bold;">479 258,00</div><div class="t " style="left:115.60px;width:600px;text-align:right;top:708.95px;font-size:10.1px;color:#1e1e1e;font-weight:bold;">7 064 606,24</div>
</div></body></html>
